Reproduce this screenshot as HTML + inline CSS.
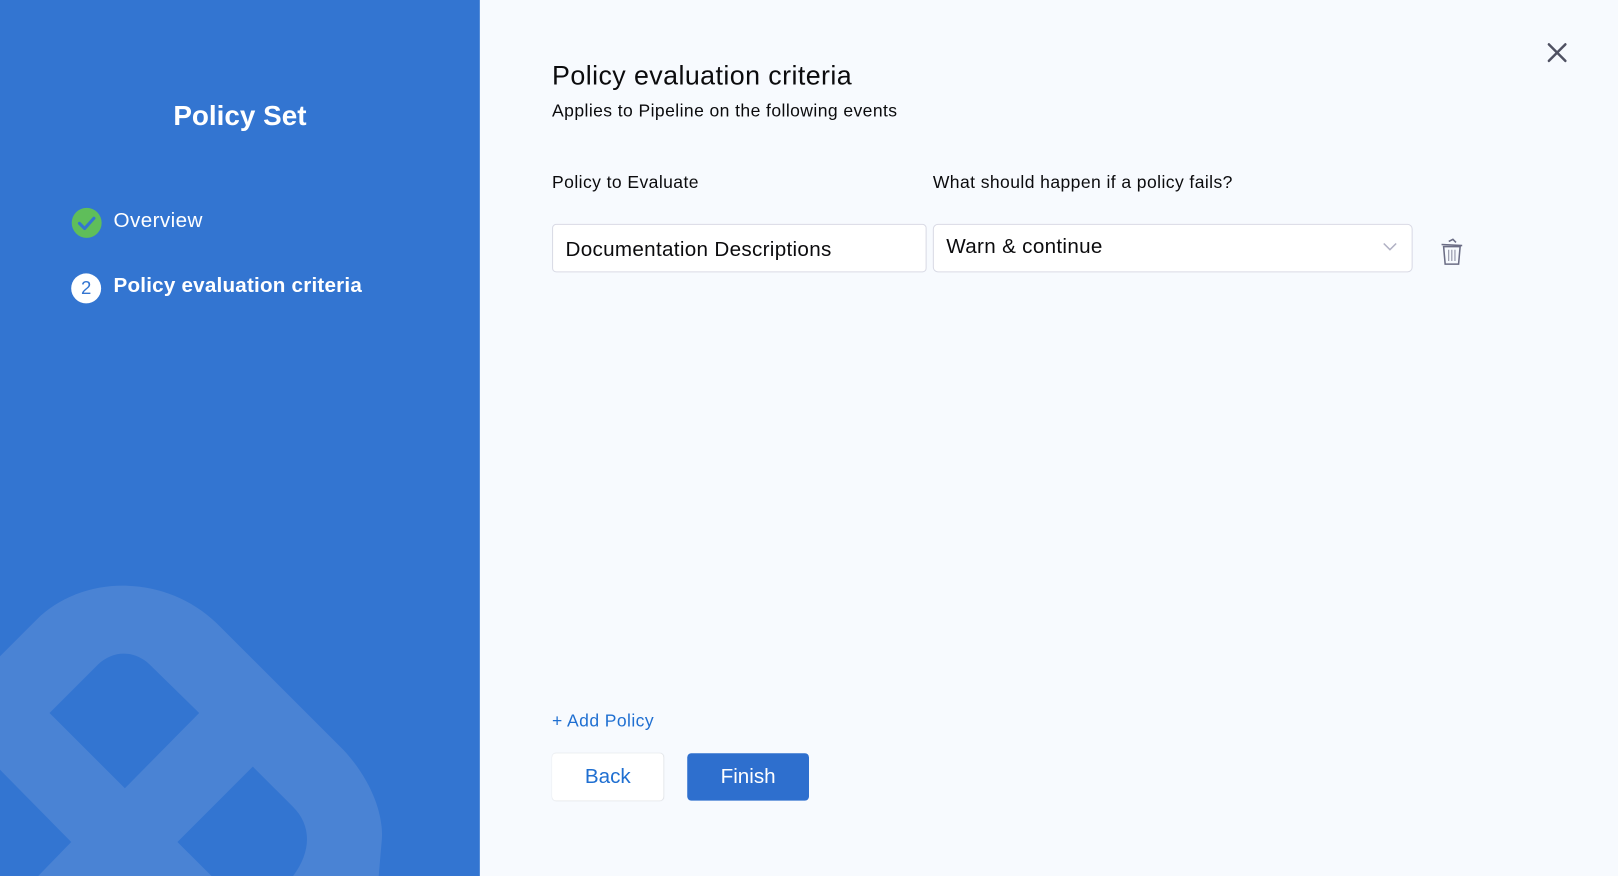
<!DOCTYPE html>
<html><head><meta charset="utf-8"><style>
html,body{margin:0;padding:0;width:1618px;height:876px;overflow:hidden;background:#f7fafe}
#s{position:absolute;left:0;top:0;width:1568px;height:849px;overflow:hidden;transform:scale(1.03189,1.03180);transform-origin:0 0;font-family:"Liberation Sans",sans-serif}
.l{position:absolute;left:0;top:0;width:465px;height:849px;background:#3375d1;overflow:hidden}
.a{position:absolute;white-space:nowrap}
</style></head><body><div id="s">
<div class="l">
<svg width="465" height="849" style="position:absolute;left:0;top:0">
<path fill="#4a83d4" fill-rule="evenodd" d="M0,636 L35,601 C80,556 160,556 210,604 L333,727 C360,756 372,790 370,814 L367,849 L37,849 L69,816 L0,746 Z M48,691 L95,644 C110,630 130,630 145,644 L193,691 L121,764 Z M172,816 L245,743 L284,782 C302,800 302,825 284,849 L205,849 Z"/>
</svg>
<div class="a" style="left:0;width:465px;text-align:center;top:97px;color:#fff;font-size:27px;font-weight:bold">Policy Set</div>
<svg class="a" style="left:69px;top:201px" width="30" height="30"><circle cx="15" cy="15" r="14.5" fill="#5fbe5a"/><path d="M8 15.5l5 5 9-10" fill="none" stroke="#3375d1" stroke-width="3" stroke-linecap="round" stroke-linejoin="round"/></svg>
<div class="a" style="left:110px;top:203px;color:#fff;font-size:20px;letter-spacing:0.4px">Overview</div>
<div class="a" style="left:69px;top:265px;width:29px;height:29px;border-radius:50%;background:#fff;color:#3375d1;font-size:18px;text-align:center;line-height:29px">2</div>
<div class="a" style="left:110px;top:266px;color:#fff;font-size:20px;font-weight:bold;letter-spacing:0.2px">Policy evaluation criteria</div>
</div>
<svg class="a" style="left:1499px;top:41px" width="20" height="20"><path d="M2 2l16 16M18 2L2 18" stroke="#4f5162" stroke-width="2.4" stroke-linecap="round"/></svg>
<div class="a" style="left:535px;top:58px;font-size:26px;color:#0b0b0d;letter-spacing:0.4px">Policy evaluation criteria</div>
<div class="a" style="left:535px;top:98px;font-size:17px;color:#0b0b0d;letter-spacing:0.4px">Applies to Pipeline on the following events</div>
<div class="a" style="left:535px;top:167px;font-size:17px;color:#0b0b0d;letter-spacing:0.4px">Policy to Evaluate</div>
<div class="a" style="left:904px;top:167px;font-size:17px;color:#0b0b0d;letter-spacing:0.4px">What should happen if a policy fails?</div>
<div class="a" style="left:535px;top:217px;width:361px;height:45px;border:1px solid #d9dae5;border-radius:4px;background:#fff"></div>
<div class="a" style="left:548px;top:231px;font-size:20px;color:#0b0b0d;letter-spacing:0.3px">Documentation Descriptions</div>
<div class="a" style="left:904px;top:217px;width:463px;height:45px;border:1px solid #d9dae5;border-radius:5px;background:#fff"></div>
<div class="a" style="left:917px;top:228px;font-size:20px;color:#0b0b0d;letter-spacing:0.3px">Warn &amp; continue</div>
<svg class="a" style="left:1340px;top:234px" width="14" height="10"><path d="M1 2l6 6 6-6" fill="none" stroke="#b0b1c4" stroke-width="1.5"/></svg>
<svg class="a" style="left:1395px;top:229px" width="24" height="30"><g fill="none" stroke="#6b6d85" stroke-width="1.5"><path d="M2 8l20 1M9 5l4-2 3 3"/><path d="M4 10l1.5 17h13L20 10z"/><path d="M9 13v11M12 13v11M15 13v11" stroke-width="0.8"/></g></svg>
<div class="a" style="left:535px;top:689px;font-size:17px;color:#1f6fd1;letter-spacing:0.4px">+ Add Policy</div>
<div class="a" style="left:535px;top:730px;width:108px;height:46px;background:#fff;border-radius:4px;box-shadow:0 0 1px rgba(0,0,0,.15);color:#1f6fd1;font-size:20px;text-align:center;line-height:46px">Back</div>
<div class="a" style="left:666px;top:730px;width:118px;height:46px;background:#2e6fce;border-radius:4px;color:#fff;font-size:20px;text-align:center;line-height:46px">Finish</div>
</div></body></html>
